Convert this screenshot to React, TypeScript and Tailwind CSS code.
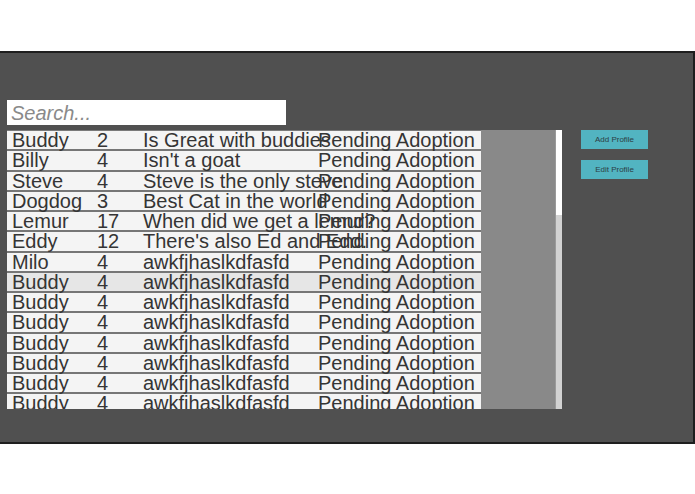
import React from "react";

const rows: [string, string, string, string][] = [
  ["Buddy", "2", "Is Great with buddies", "Pending Adoption"],
  ["Billy", "4", "Isn't a goat", "Pending Adoption"],
  ["Steve", "4", "Steve is the only steve.", "Pending Adoption"],
  ["Dogdog", "3", "Best Cat in the world", "Pending Adoption"],
  ["Lemur", "17", "When did we get a lemur?", "Pending Adoption"],
  ["Eddy", "12", "There's also Ed and Edd.", "Pending Adoption"],
  ["Milo", "4", "awkfjhaslkdfasfd", "Pending Adoption"],
  ["Buddy", "4", "awkfjhaslkdfasfd", "Pending Adoption"],
  ["Buddy", "4", "awkfjhaslkdfasfd", "Pending Adoption"],
  ["Buddy", "4", "awkfjhaslkdfasfd", "Pending Adoption"],
  ["Buddy", "4", "awkfjhaslkdfasfd", "Pending Adoption"],
  ["Buddy", "4", "awkfjhaslkdfasfd", "Pending Adoption"],
  ["Buddy", "4", "awkfjhaslkdfasfd", "Pending Adoption"],
  ["Buddy", "4", "awkfjhaslkdfasfd", "Pending Adoption"],
  ["Buddy", "4", "awkfjhaslkdfasfd", "Pending Adoption"],
];

export default function App() {
  return (
    <div
      className="w-[695px] h-[494px] bg-white overflow-hidden"
      style={{ fontFamily: '"Liberation Sans", Arial, sans-serif' }}
    >
      <div className="h-[51px]" />
      <div className="h-[393px] bg-[#505050] border-t-2 border-r-2 border-b-2 border-[#1e1e1e] pt-[47px] pl-[7px] flex gap-[19px]">
        <div className="flex flex-col gap-[5px] w-[555px]">
          <div className="w-[279px] h-[25px] bg-white flex items-center pl-[4px]">
            <span className="text-[20px] leading-[20px] italic text-[#8a8a8a]">Search...</span>
          </div>
          <div className="h-[279px] flex overflow-hidden">
            <div className="w-[548px] bg-[#898989] overflow-hidden">
              <div className="w-[474px] border-t border-[#7a7a7a]">
                {rows.map((r, i) => (
                  <div
                    key={i}
                    className={`h-[20.25px] border-b-2 border-[#767676] grid grid-cols-[85px_46px_175px_1fr] pl-[5px] text-[20px] leading-[18px] text-[#353535] whitespace-nowrap ${
                      i === 7 ? "bg-[#e6e6e6]" : "bg-[#f4f4f4]"
                    }`}
                  >
                    <span className="overflow-visible">{r[0]}</span>
                    <span className="overflow-visible">{r[1]}</span>
                    <span className="overflow-visible">{r[2]}</span>
                    <span className="overflow-visible">{r[3]}</span>
                  </div>
                ))}
              </div>
            </div>
            <div className="w-[7px] bg-[#d2d2d2] border-l border-[#9a9a9a]">
              <div className="h-[85px] bg-white" />
            </div>
          </div>
        </div>
        <div className="flex flex-col gap-[11px] pt-[30px]">
          <button className="w-[67px] h-[19px] bg-[#52b4c1] text-[8px] text-[#2c3e44] flex items-center justify-center">
            Add Profile
          </button>
          <button className="w-[67px] h-[19px] bg-[#52b4c1] text-[8px] text-[#2c3e44] flex items-center justify-center">
            Edit Profile
          </button>
        </div>
      </div>
    </div>
  );
}
